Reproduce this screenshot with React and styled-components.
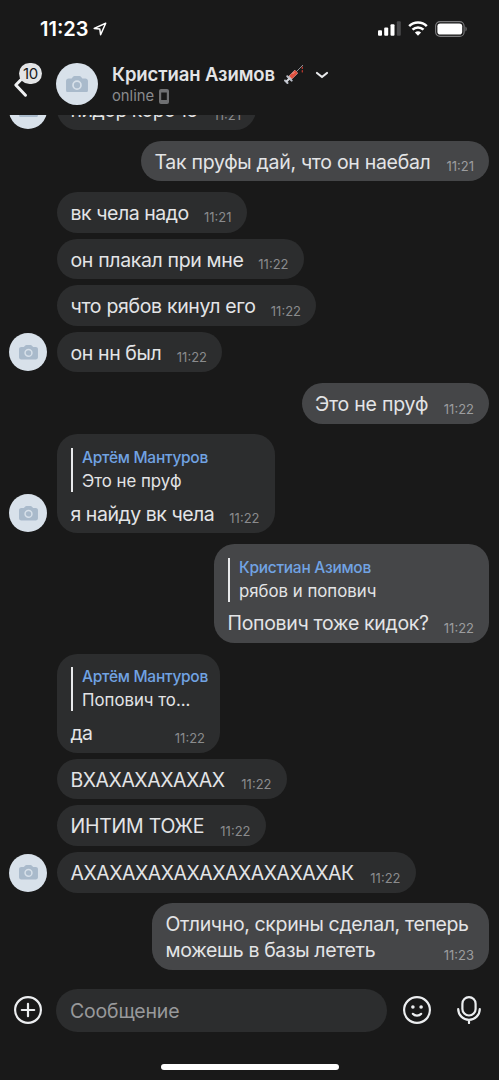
import React from "react"
import styled, { createGlobalStyle } from "styled-components"

const GlobalStyle = createGlobalStyle`
  * { box-sizing: border-box; }
  html, body { margin: 0; padding: 0; background: #191919; }
  body {
    font-family: Inter, "Noto Sans", sans-serif;
    color: #e3e4e6;
    overflow: hidden;
  }
`

const Phone = styled.div`
  width: 499px;
  height: 1080px;
  display: flex;
  flex-direction: column;
  background: #191919;
`

/* status bar */
const StatusBar = styled.div`
  height: 56px;
  padding: 1px 31px 0 40px;
  display: flex;
  align-items: center;
  color: #fff;
`
const Clock = styled.div`
  font-size: 20px;
  font-weight: 600;
  line-height: 24px;
  margin-right: 5px;
`
const StatusIcons = styled.div`
  margin-left: auto;
  display: flex;
  align-items: center;
  gap: 7px;
`

/* header */
const Header = styled.header`
  height: 59px;
  flex: none;
  display: flex;
  align-items: flex-start;
  padding: 7px 14px 0 13px;
`
const Back = styled.div`
  width: 43px;
  height: 42px;
  position: relative;
`
const Unread = styled.span`
  position: absolute;
  left: 6px;
  top: 0;
  width: 23px;
  height: 21px;
  border-radius: 11px;
  background: #e3e4e6;
  color: #191919;
  font-size: 15px;
  letter-spacing: -0.4px;
  line-height: 21px;
  text-align: center;
`
const Avatar = styled.div`
  width: ${p => p.$size}px;
  height: ${p => p.$size}px;
  flex: none;
  border-radius: 50%;
  background: #d8e1ea;
  display: flex;
  align-items: center;
  justify-content: center;
`
const Person = styled.div`
  margin-left: 14px;
  display: flex;
  flex-direction: column;
`
const NameRow = styled.div`
  display: flex;
  align-items: center;
  height: 22px;
`
const Name = styled.div`
  font-size: 18.5px;
  font-weight: 600;
  line-height: 22px;
  letter-spacing: -0.1px;
  white-space: nowrap;
  width: 172px;
`
const Online = styled.div`
  display: flex;
  align-items: center;
  gap: 5px;
  height: 22px;
  font-size: 14.8px;
  color: #8a8b8d;
`

/* messages */
const List = styled.main`
  height: 860px;
  flex: none;
  overflow: hidden;
  display: flex;
  flex-direction: column;
  justify-content: flex-end;
  gap: 10.67px;
  padding: 0 10px 5px 9px;
`
const Group = styled.section`
  display: flex;
  align-items: flex-end;
  justify-content: ${p => (p.$out ? "flex-end" : "flex-start")};
`
const Side = styled.div`
  width: 48px;
  flex: none;
  padding-bottom: 1px;
`
const Stack = styled.div`
  display: flex;
  flex-direction: column;
  align-items: flex-start;
  gap: 6px;
`
const Bubble = styled.div`
  width: ${p => p.$w}px;
  padding: ${p => (p.$quote ? "13.5px" : "8px")} 15px 6px 13.5px;
  border-radius: 20.5px;
  background: ${p => (p.$out ? "#454648" : "#2c2d2e")};
`
const Line = styled.div`
  display: flex;
  align-items: flex-end;
  justify-content: space-between;
`
const Text = styled.div`
  min-width: 0;
  font-size: 19.5px;
  line-height: 26px;
  padding-bottom: 0.67px;
  letter-spacing: ${p => p.$track || -0.33}px;
  white-space: pre;
`
const Time = styled.time`
  flex: none;
  font-size: 13px;
  line-height: 16px;
  margin-bottom: 1.2px;
  color: ${p => (p.$out ? "#9c9d9f" : "#8a8b8d")};
`
const Quote = styled.div`
  height: 44px;
  margin-bottom: 8.83px;
  padding-left: 9.5px;
  border-left: 2.5px solid #e8e9eb;
  white-space: nowrap;
`
const QuoteName = styled.div`
  font-size: 15.5px;
  font-weight: 500;
  line-height: 19px;
  letter-spacing: -0.27px;
  color: #71a3e3;
`
const QuoteText = styled.div`
  font-size: 16.8px;
  line-height: 22px;
  margin-top: 3px;
`

/* composer */
const Composer = styled.footer`
  display: flex;
  align-items: center;
  height: 71px;
  padding: 0 14px 0 14px;

  svg {
    display: block;
    margin-bottom: 1px;
  }
`
const Field = styled.div`
  width: 331px;
  height: 43px;
  margin: 0 16px 0 14px;
  padding-left: 14px;
  border-radius: 22px;
  background: #2c2d2e;
  color: #98999b;
  font-size: 19.5px;
  line-height: 44px;
  letter-spacing: -0.2px;
`
const MicSlot = styled.div`
  margin: 0 1.5px 0 auto;
`
const HomeBar = styled.div`
  width: 178px;
  height: 6px;
  margin: 18px 0 0 161px;
  border-radius: 3px;
  background: #fff;
`

const Camera = ({ size }) => (
  <svg width={size} height={size * 0.77} viewBox="0 0 22 17">
    <path
      fill="#a9bacb"
      d="M2.6 2.4h3L7 .8C7.400.3 7.900.1 8.500.1h5c.6 0 1.100.2 1.500.7l1.400 1.600h3C20.900 2.400 22 3.400 22 4.900v9.400c0 1.500-1.100 2.500-2.600 2.500H2.600C1.100 16.800 0 15.800 0 14.300V4.900c0-1.500 1.100-2.500 2.600-2.500z"
    />
    <circle cx="11" cy="9.200" r="4" fill="none" stroke="#d8e1ea" strokeWidth="1.700" />
  </svg>
)

const Syringe = () => (
  <svg width="20" height="20" viewBox="0 0 20 20">
    <path d="M11.500 8.500 19 1" stroke="#8c8f94" strokeWidth="1" />
    <path d="M5 15 12.300 7.700" stroke="#d9dce0" strokeWidth="4.500" />
    <path d="M6.500 13.500 12.500 7.500" stroke="#e0513f" strokeWidth="4" />
    <path d="M8.500 10 10.500 8" stroke="#f59a8c" strokeWidth="1" />
    <path d="M3.300 12.200 7.700 16.600M1 16.500 3.500 19" stroke="#b9bdc6" strokeWidth="2" strokeLinecap="round" />
    <path d="M2.200 17.800 5.500 14.500" stroke="#d4d7dd" strokeWidth="2" />
    <path d="M18.300 3v1.500M18.300 6.500v1.500" stroke="#c43b30" strokeWidth="1.200" strokeLinecap="round" />
  </svg>
)

const history = [
  { rows: [{ w: 199, text: "пидор короче", time: "11:21", track: -0.5 }] },
  { out: true, rows: [{ w: 348, text: "Так пруфы дай, что он наебал", time: "11:21", track: -0.3 }] },
  {
    rows: [
      { w: 189.5, text: "вк чела надо", time: "11:21", track: -0.46 },
      { w: 246.5, text: "он плакал при мне", time: "11:22", track: -0.35 },
      { w: 259, text: "что рябов кинул его", time: "11:22" },
      { w: 165, text: "он нн был", time: "11:22", track: -0.4 },
    ],
  },
  { out: true, rows: [{ w: 187.5, text: "Это не пруф", time: "11:22", track: -0.22 }] },
  { rows: [{ w: 217.5, text: "я найду вк чела", time: "11:22", track: -0.47, quote: ["Артём Мантуров", "Это не пруф"] }] },
  { out: true, rows: [{ w: 275, text: "Попович тоже кидок?", time: "11:22", quote: ["Кристиан Азимов", "рябов и попович"] }] },
  {
    rows: [
      { w: 163, text: "да", time: "11:22", track: -0.8, quote: ["Артём Мантуров", "Попович то..."] },
      { w: 229.5, text: "ВХАХАХАХАХАХ", time: "11:22", track: -0.48 },
      { w: 208.5, text: "ИНТИМ ТОЖЕ", time: "11:22", track: -0.22 },
      { w: 358.5, text: "АХАХАХАХАХАХАХАХАХАХАК", time: "11:22", track: -0.5 },
    ],
  },
  { out: true, rows: [{ w: 337, text: "Отлично, скрины сделал, теперь\nможешь в базы лететь", time: "11:23", track: -0.36 }] },
]

const Message = ({ row, out }) => (
  <Bubble $w={row.w} $out={out} $quote={!!row.quote}>
    {row.quote && (
      <Quote>
        <QuoteName>{row.quote[0]}</QuoteName>
        <QuoteText>{row.quote[1]}</QuoteText>
      </Quote>
    )}
    <Line>
      <Text $track={row.track}>{row.text}</Text>
      <Time $out={out}>{row.time}</Time>
    </Line>
  </Bubble>
)

const App = () => (
  <Phone>
    <GlobalStyle />
    <StatusBar>
      <Clock>11:23</Clock>
      <svg width="14" height="14" viewBox="0 0 14 14" fill="none" stroke="#fff" strokeWidth="1.500" strokeLinejoin="round">
        <path d="M12.700 1.200 1.200 6.400l5.600.7.8 5.600z" />
      </svg>
      <StatusIcons>
        <svg width="23" height="15" viewBox="0 0 23 15" fill="#fff">
          <rect x="0" y="9.300" width="4" height="5.500" rx="1" />
          <rect x="6.200" y="6.500" width="4" height="8.300" rx="1" />
          <rect x="12.500" y="3.300" width="4" height="11.500" rx="1" />
          <rect x="18.800" y="0.200" width="4" height="14.600" rx="1" fill="#48484a" />
        </svg>
        <svg width="20" height="15" viewBox="0 0 20 15">
          <path d="M1.200 5.100a12.600 12.600 0 0 1 17.600 0" fill="none" stroke="#fff" strokeWidth="2.600" />
          <path d="M4.500 8.700a7.900 7.900 0 0 1 11 0" fill="none" stroke="#fff" strokeWidth="2.500" />
          <path d="M10 14.700 6.900 11.600a4.500 4.500 0 0 1 6.200 0z" fill="#fff" />
        </svg>
        <svg width="33" height="16" viewBox="0 0 33 16">
          <rect x="0.600" y="0.600" width="28.500" height="14.800" rx="4.500" fill="none" stroke="#7c7c7e" strokeWidth="1.100" />
          <rect x="2.400" y="2.400" width="24.800" height="11.200" rx="2.800" fill="#fff" />
          <path d="M30.500 5.500c1.500.7 1.500 4.300 0 5z" fill="#7c7c7e" />
        </svg>
      </StatusIcons>
    </StatusBar>

    <Header>
      <Back>
        <svg width="20" height="42" viewBox="0 0 20 42" fill="none" stroke="#f0f1f3" strokeWidth="3" strokeLinecap="round" strokeLinejoin="round">
          <path d="M12.500 12 2.800 22l9.700 10.200" />
        </svg>
        <Unread>10</Unread>
      </Back>
      <Avatar $size={42}>
        <Camera size={22} />
      </Avatar>
      <Person>
        <NameRow>
          <Name>Кристиан Азимов</Name>
          <Syringe />
          <svg width="36" height="10" viewBox="0 0 36 10" fill="none" stroke="#e8e9eb" strokeWidth="2.200" strokeLinecap="round" strokeLinejoin="round">
            <path d="M13 4l5 4 5-4" />
          </svg>
        </NameRow>
        <Online>
          online
          <svg width="10" height="15" viewBox="0 0 10 15">
            <path fillRule="evenodd" fill="#6f7072" d="M2 0h6a2 2 0 0 1 2 2v11a2 2 0 0 1-2 2H2a2 2 0 0 1-2-2V2a2 2 0 0 1 2-2zm.2 3.500v7.500h5.600V3.500z" />
          </svg>
        </Online>
      </Person>
    </Header>

    <List>
      {history.map((group, i) => (
        <Group key={i} $out={group.out}>
          {!group.out && (
            <Side>
              <Avatar $size={38}>
                <Camera size={19} />
              </Avatar>
            </Side>
          )}
          <Stack>
            {group.rows.map((row, j) => (
              <Message key={j} row={row} out={group.out} />
            ))}
          </Stack>
        </Group>
      ))}
    </List>

    <Composer>
      <svg width="28" height="28" viewBox="0 0 28 28" fill="none" stroke="#eceef0" strokeWidth="2.200" strokeLinecap="round">
        <circle cx="14" cy="14" r="12.900" />
        <path d="M14 7.800v12.400M7.800 14h12.400" />
      </svg>
      <Field>Сообщение</Field>
      <svg width="28" height="28" viewBox="0 0 28 28" fill="none" stroke="#eceef0" strokeWidth="2.200" strokeLinecap="round">
        <circle cx="14" cy="14" r="12.900" />
        <path d="M9.800 17.800c2 2.400 6.400 2.400 8.400 0" />
        <circle cx="9.900" cy="11" r="1.800" fill="#eceef0" stroke="none" />
        <circle cx="18.100" cy="11" r="1.800" fill="#eceef0" stroke="none" />
      </svg>
      <MicSlot>
        <svg width="30" height="28" viewBox="0 0 30 28" fill="none" stroke="#eceef0" strokeWidth="2.200" strokeLinecap="round">
          <rect x="8.400" y="1.100" width="13.200" height="18.400" rx="6.600" />
          <path d="M4.200 13a10.800 10.800 0 0 0 21.600 0M15 24v3" />
        </svg>
      </MicSlot>
    </Composer>
    <HomeBar />
  </Phone>
)

export default App
